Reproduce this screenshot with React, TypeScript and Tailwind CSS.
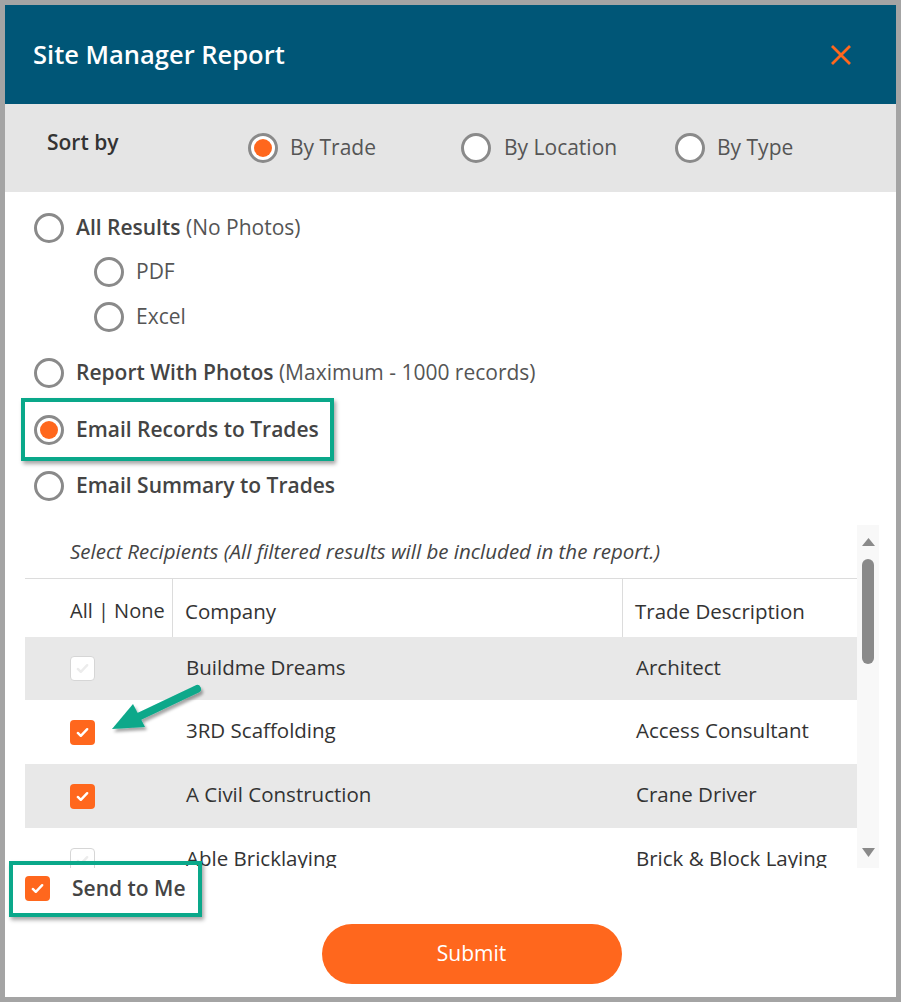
import React from 'react';

const font = { fontFamily: '"Open Sans", "Noto Sans", sans-serif' };

const Radio = ({ checked = false }: { checked?: boolean }) => (
  <span className="flex h-[30px] w-[30px] shrink-0 items-center justify-center rounded-full border-[3px] border-[#8a8a8a] bg-white">
    {checked && <span className="h-[18px] w-[18px] rounded-full bg-[#ff671d]" />}
  </span>
);

const Check = ({ checked = false }: { checked?: boolean }) => (
  <span
    className={
      checked
        ? 'flex h-[25px] w-[25px] shrink-0 items-center justify-center rounded-[4px] bg-[#ff671d]'
        : 'flex h-[25px] w-[25px] shrink-0 items-center justify-center rounded-[4px] border border-[#d6d6d6] bg-white'
    }
  >
    <svg width="15" height="15" viewBox="0 0 16 16" fill="none">
      <path
        d="M3 8.5l3.2 3L13 4.5"
        stroke={checked ? '#ffffff' : '#ececec'}
        strokeWidth="2.6"
        strokeLinecap="round"
        strokeLinejoin="round"
      />
    </svg>
  </span>
);

const rows = [
  { company: 'Buildme Dreams', trade: 'Architect', checked: false, h: 'h-[63px]', bg: 'bg-[#e8e8e8]' },
  { company: '3RD Scaffolding', trade: 'Access Consultant', checked: true, h: 'h-[64px]', bg: 'bg-white' },
  { company: 'A Civil Construction', trade: 'Crane Driver', checked: true, h: 'h-[64px]', bg: 'bg-[#e8e8e8]' },
  { company: 'Able Bricklaying', trade: 'Brick & Block Laying', checked: false, h: 'h-[64px]', bg: 'bg-white' },
];

export default function App() {
  return (
    <div className="h-[1002px] w-[901px] bg-[#a4a4a4] p-[5px]" style={font}>
      <div className="relative flex h-[992px] w-[891px] flex-col bg-white">
        {/* Header */}
        <div className="flex h-[99px] shrink-0 items-center justify-between bg-[#005677] pl-[28px] pr-[44px]">
          <h1 className="text-[25.5px] font-semibold text-white">Site Manager Report</h1>
          <svg width="22" height="22" viewBox="0 0 22 22">
            <path d="M2 2L20 20M20 2L2 20" stroke="#ff671d" strokeWidth="2.8" />
          </svg>
        </div>

        {/* Sort by */}
        <div className="flex h-[88px] shrink-0 items-center bg-[#e5e5e5] pl-[42px] text-[21px]">
          <span className="mb-[10px] w-[201px] font-semibold text-[#333]">Sort by</span>
          <label className="flex w-[213px] items-center gap-[12px] text-[#555]">
            <Radio checked />
            By Trade
          </label>
          <label className="flex w-[214px] items-center gap-[13px] text-[#555]">
            <Radio />
            By Location
          </label>
          <label className="flex items-center gap-[12px] text-[#555]">
            <Radio />
            By Type
          </label>
        </div>

        {/* Report options */}
        <div className="flex flex-col pl-[29px] pt-[14px] text-[21px] text-[#555]">
          <label className="flex h-[44px] items-center gap-[12px]">
            <Radio />
            <span>
              <b className="font-semibold text-[#444]">All Results</b> (No Photos)
            </span>
          </label>
          <label className="ml-[60px] flex h-[44px] items-center gap-[12px]">
            <Radio />
            PDF
          </label>
          <label className="ml-[60px] mt-[1px] flex h-[44px] items-center gap-[12px]">
            <Radio />
            Excel
          </label>
          <label className="mt-[12px] flex h-[44px] items-center gap-[12px]">
            <Radio />
            <span>
              <b className="font-semibold text-[#444]">Report With Photos</b> (Maximum - 1000 records)
            </span>
          </label>
          <label className="mt-[13px] flex h-[44px] items-center gap-[12px]">
            <Radio checked />
            <b className="font-semibold text-[#444]">Email Records to Trades</b>
          </label>
          <label className="mt-[12px] flex h-[44px] items-center gap-[12px]">
            <Radio />
            <b className="font-semibold text-[#444]">Email Summary to Trades</b>
          </label>
        </div>

        {/* Recipients */}
        <div className="ml-[20px] mr-[17px] mt-[17px] flex h-[343px] overflow-hidden">
          <div className="flex-1 overflow-hidden text-[20.5px] text-[#333]">
            <div className="flex h-[53px] items-center whitespace-nowrap pl-[45px] text-[20.5px] italic text-[#444]">
              Select Recipients (All filtered results will be included in the report.)
            </div>
            <div className="flex h-[59px] items-center border-t border-[#dcdcdc]">
              <div className="flex h-full w-[148px] items-center border-r border-[#dcdcdc] pl-[45px] pt-[6px] text-[20px]">All | None</div>
              <div className="flex h-full w-[450px] items-center border-r border-[#dcdcdc] pl-[12px] pt-[6px]">Company</div>
              <div className="pl-[12px] pt-[6px]">Trade Description</div>
            </div>
            {rows.map((r) => (
              <div key={r.company} className={`flex items-center ${r.h} ${r.bg}`}>
                <div className="w-[148px] pl-[45px]">
                  <Check checked={r.checked} />
                </div>
                <div className="w-[450px] pb-[3px] pl-[13px]">{r.company}</div>
                <div className="pb-[3px] pl-[13px]">{r.trade}</div>
              </div>
            ))}
          </div>
          <div className="flex w-[22px] shrink-0 flex-col items-center bg-[#f8f8f8] pt-[13px]">
            <svg width="13" height="8" viewBox="0 0 13 8">
              <path d="M6.5 0L13 8H0z" fill="#8a8a8a" />
            </svg>
            <div className="mt-[13px] h-[105px] w-[12px] rounded-full bg-[#8a8a8a]" />
            <div className="flex-1" />
            <svg className="mb-[11px]" width="13" height="9" viewBox="0 0 13 9">
              <path d="M0 0H13L6.5 9z" fill="#8a8a8a" />
            </svg>
          </div>
        </div>

        {/* Send to me */}
        <label className="ml-[20px] mt-[5px] flex items-center gap-[22px] text-[21px]">
          <Check checked />
          <b className="font-semibold text-[#444]">Send to Me</b>
        </label>

        <div className="mt-[19px] flex justify-center pl-[42px]">
          <button className="h-[60px] w-[300px] rounded-full bg-[#ff671d] text-[21px] text-white">Submit</button>
        </div>

        {/* Annotations */}
        <div className="pointer-events-none absolute left-[16px] top-[393px] h-[63px] w-[313px] border-[4px] border-[#0aa88a] shadow-[2px_3px_4px_rgba(0,0,0,0.35)]" />
        <div className="pointer-events-none absolute left-[4px] top-[856px] h-[56px] w-[193px] border-[4px] border-[#0aa88a] shadow-[2px_3px_4px_rgba(0,0,0,0.35)]" />
        <svg className="pointer-events-none absolute left-[95px] top-[675px]" width="110" height="60" viewBox="0 0 110 60">
          <defs>
            <filter id="sh" x="-20%" y="-20%" width="150%" height="160%">
              <feDropShadow dx="2" dy="3" stdDeviation="1.5" floodColor="#000" floodOpacity="0.35" />
            </filter>
          </defs>
          <g filter="url(#sh)">
            <path d="M97 9L38 37" stroke="#0aa88a" strokeWidth="8" strokeLinecap="round" />
            <path d="M12 49L33 24L45 47z" fill="#0aa88a" />
          </g>
        </svg>
      </div>
    </div>
  );
}
